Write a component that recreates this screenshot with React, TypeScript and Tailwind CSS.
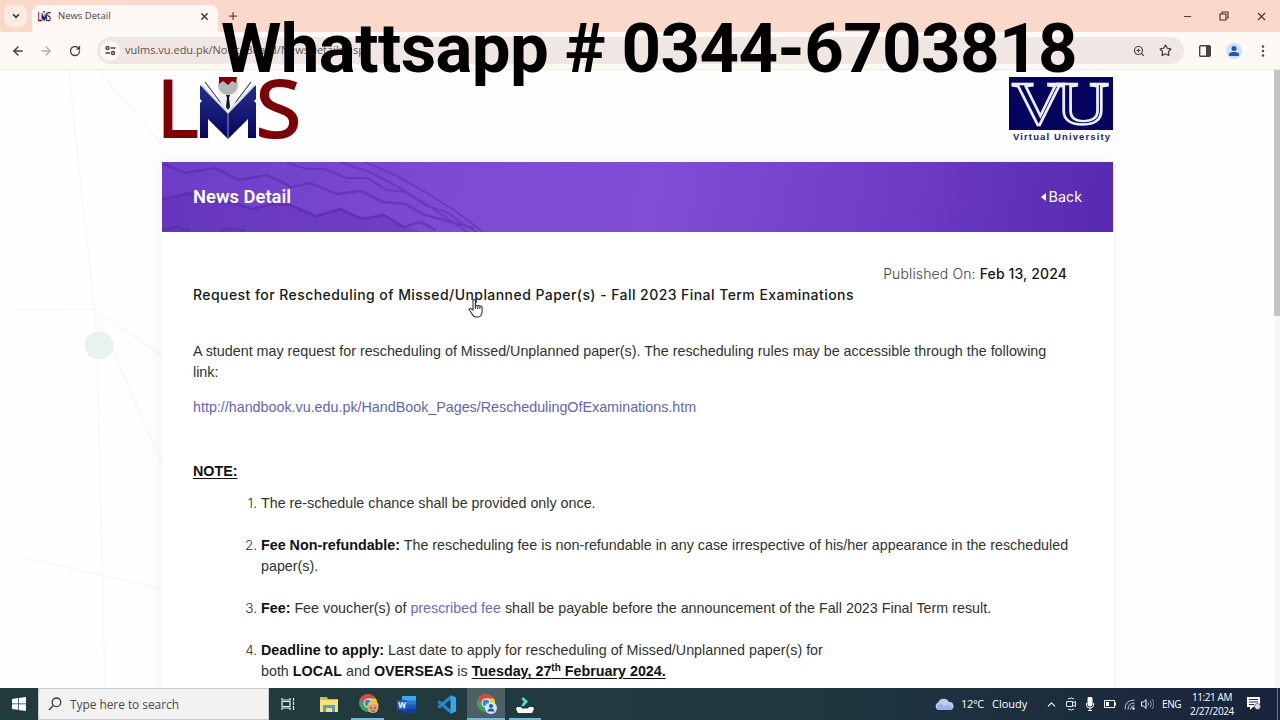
import type { ReactNode } from "react";
import { ArrowLeft, ArrowRight, ChevronDown, ChevronUp, Minus, Plus, RotateCw, Star, X, ZoomIn } from "lucide-react";

const LmsLogo = ({ className }: { className?: string }) => (
  <svg className={className} viewBox="0 0 138 66" fill="none" preserveAspectRatio="none">
    <defs>
      <linearGradient id="book" x1="0" y1="0" x2="0" y2="1">
        <stop offset="0" stopColor="#27308c" />
        <stop offset="1" stopColor="#05055c" />
      </linearGradient>
    </defs>
    <g fill="#7c0006" stroke="#7c0006" strokeWidth="2.2" fontFamily="'Open Sans', sans-serif" fontSize="79">
      <text x="-5" y="60">L</text>
      <text x="94" y="60" textLength="45" lengthAdjust="spacingAndGlyphs">S</text>
    </g>
    <path d="M38 20l2-13 26 29 26-29 2 13-28 18z" fill="#d5d8ea" />
    <path d="M43 5l22 29M89 5L67 34M39 10l18 21M93 10L75 31" stroke="#3c4488" strokeWidth="1.2" />
    <path d="M38 8l28 29 28-29v14l-2 2 2 2v35h-8V42L66 62 46 42v19h-8V26l2-2-2-2z" fill="url(#book)" />
    <path d="M66 36v26" stroke="#8c92c4" strokeWidth="1" />
    <path d="M55 13h22l-4 14-7 9-7-9z" fill="#f3f3f3" />
    <circle cx="66" cy="8" r="10" fill="#b5b7b6" />
    <path d="M57 0h18l-1 6-4-2-4 4-5-4-4 3z" fill="#7c0006" />
    <path d="M64 18h4l-1 3 1 9-2 3-2-3 1-9z" fill="#161616" />
  </svg>
);

const VuLogo = () => (
  <svg className="h-[66px] w-[104px]" viewBox="0 0 104 66">
    <rect width="104" height="53" fill="#05035e" />
    <g fill="#05035e" stroke="#eceefa" strokeWidth="2.3" fontFamily="'Liberation Serif', serif" fontSize="62">
      <text x="3" y="47" textLength="53" lengthAdjust="spacingAndGlyphs">V</text>
      <text x="47" y="47" textLength="53" lengthAdjust="spacingAndGlyphs">U</text>
    </g>
    <text x="4" y="62.5" fontFamily="'Liberation Sans', sans-serif" fontSize="9.5" fontWeight="700" fill="#25236f" textLength="97">
      Virtual University
    </text>
  </svg>
);

const Chrome = ({ children }: { children: ReactNode }) => (
  <svg className="h-[22px] w-[22px]" viewBox="0 0 22 22">
    <circle cx="10" cy="10" r="9" fill="#35a854" />
    <path d="M2.2 5.5A9 9 0 0 1 17.8 5.5H10L6 12.3z" fill="#e5453a" />
    <path d="M17.8 5.5A9 9 0 0 1 10 19l4-6.7L10 5.5z" fill="#fcc934" />
    <circle cx="10" cy="10" r="4.5" fill="#fff" />
    <circle cx="10" cy="10" r="3.5" fill="#3f7fe8" />
    {children}
  </svg>
);

const TabStrip = () => (
  <div className="flex h-8 shrink-0 bg-[#fbd9ca] pl-1">
    <div className="mt-[5px] flex h-[22px] w-[23px] items-center justify-center rounded-lg bg-[#fdece4]">
      <ChevronDown className="h-[10px] w-[10px] text-[#3b2a25]" strokeWidth={4} />
    </div>
    <div className="ml-[5px] mt-[5px] flex w-[186px] items-center rounded-t-lg bg-[#fdf8f4] pb-[5px] pl-[6px] pr-[8px]">
      <LmsLogo className="h-[11px] w-[13px] shrink-0" />
      <span className="ml-[7px] flex-1 whitespace-nowrap font-['Open_Sans',sans-serif] text-[9.500px] text-[#4a423f]">News Detail</span>
      <X className="h-[11px] w-[11px] text-[#3b302c]" strokeWidth={3} />
    </div>
    <Plus className="ml-[9px] mt-[10px] h-[12px] w-[12px] text-[#6b4638]" strokeWidth={2.5} />
    <div className="ml-auto flex items-center gap-[26px] pr-[12px] text-[#40302a]">
      <Minus className="h-[11px] w-[11px]" strokeWidth={2} />
      <svg className="h-[10px] w-[10px]" viewBox="0 0 10 10" fill="none" stroke="currentColor" strokeWidth="1.1">
        <path d="M1 3h6v6H1zM3 3V1h6v6H7" />
      </svg>
      <X className="h-[13px] w-[13px]" strokeWidth={2} />
    </div>
  </div>
);

const Toolbar = () => (
  <div className="flex h-[38px] shrink-0 items-center border-b border-[#f1ebdf] bg-[#fdf9f4] pl-[11px] text-[#4c403b]">
    <ArrowLeft className="h-[14px] w-[14px]" strokeWidth={2.5} />
    <ArrowRight className="ml-[14px] h-[14px] w-[14px] text-[#b5aca6]" strokeWidth={2.3} />
    <RotateCw className="ml-[16px] h-[12px] w-[12px]" strokeWidth={2.6} />
    <div className="ml-[16px] flex h-[27px] w-[1087px] items-center rounded-full bg-[#f0e6e3] pl-[3px] pr-[12px]">
      <div className="flex h-[20px] w-[20px] items-center justify-center rounded-full bg-[#fef9f6]">
        <svg className="h-[11px] w-[11px]" viewBox="0 0 11 11" fill="none" stroke="currentColor" strokeWidth="1.4">
          <path d="M5.5 3H10.500M.5 8H5" />
          <circle cx="2.500" cy="3" r="1.500" />
          <circle cx="8" cy="8" r="1.500" />
        </svg>
      </div>
      <span className="ml-[5px] flex-1 whitespace-nowrap font-['Open_Sans',sans-serif] text-[11px] text-[#5d5451]">
        vulms.vu.edu.pk/NoticeBoard/NewsDetails.aspx
      </span>
      <ZoomIn className="h-[12px] w-[12px]" strokeWidth={2.3} />
      <Star className="ml-[14px] h-[13px] w-[13px]" strokeWidth={2.3} />
    </div>
    <svg className="ml-[15px] h-[12px] w-[12px]" viewBox="0 0 12 12">
      <rect x=".7" y=".7" width="10.600" height="10.600" rx="1" fill="none" stroke="currentColor" strokeWidth="1.400" />
      <path d="M7 1h4.500v10H7z" fill="currentColor" />
    </svg>
    <div className="ml-[15px] flex h-[16px] w-[16px] items-center justify-center rounded-full bg-[#cfe0f8]">
      <svg className="h-[12px] w-[12px]" viewBox="0 0 12 12" fill="#1d59b5">
        <circle cx="6" cy="3.500" r="2.500" />
        <path d="M1 11V9.500C1 7.500 4 7 6 7s5 .5 5 2.500V11z" />
      </svg>
    </div>
    <svg className="ml-[19px] h-[12px] w-[4px]" viewBox="0 0 4 12" fill="currentColor">
      <circle cx="2" cy="1.500" r="1.200" />
      <circle cx="2" cy="6" r="1.200" />
      <circle cx="2" cy="10.500" r="1.200" />
    </svg>
  </div>
);

const BannerPattern = () => (
  <svg className="absolute left-0 top-0 h-[70px] w-[330px]" viewBox="0 0 330 70" fill="none">
    <path d="M0 38l28-8 22 8 22 2 18 6 20-5 18 1 26 11 24-7 22 10 22-4 20 12 16 6H0z" fill="#5527a8" opacity=".3" />
    <g stroke="#4f229f" opacity=".42">
      <path d="M0 1l23 10 30-5 24 12 28-5 25 12 18-4 27 11 24-3 22 11 22 2 20 11 22 6 26 7" strokeWidth="2.600" />
      <path d="M0 37l28-6 22 8 22 2 18 6 20-5 18 1 26 11 24-7 22 10 22-4 20 12 16-5 16 8" strokeWidth="2.600" />
      <path d="M125 1l20 6h18l22 9h20l20 12 18 2 22 14 20 6 16 12 14 8" strokeWidth="1.800" />
      <path d="M178 0l30 10 30 16 32 20 35 24M203 0l30 13 32 18 30 19 26 20" strokeWidth="1.600" />
      <path d="M0 68l14-3 14 4M58 69l12-3 14 3" strokeWidth="2" />
    </g>
  </svg>
);

const Network = () => (
  <svg className="absolute inset-0 h-[618px] w-[1274px]" viewBox="0 0 1274 618" fill="none">
    <path
      d="M69 0l10 100 13 115 5 60 8 343M98 0l66 77M14 240l84-1M98 242l63 43M98 246l63 145M18 486l144 33"
      stroke="#f7f9f8"
      strokeWidth="1.700"
    />
    <ellipse cx="99" cy="275" rx="14.500" ry="14" transform="translate(0 .5)" fill="#e9f2f1" />
  </svg>
);

const NewsCard = () => (
  <div className="relative h-[560px] w-[951px] bg-white shadow-[0_0_18px_rgba(0,0,0,0.05)]">
    <div className="relative flex h-[70px] items-center justify-between bg-linear-[100deg,#6d3dc6_0%,#7d4bd3_30%,#804dd4_52%,#6d3bc5_78%,#5728b0_100%] pl-[31px] pr-[31px] text-white">
      <BannerPattern />
      <h1 className="relative -mt-px whitespace-nowrap font-[Roboto,sans-serif] text-[18.400px] font-semibold">News Detail</h1>
      <div className="relative -mt-px flex items-center gap-[3px] font-[Inter,sans-serif] text-[14.300px]">
        <svg className="h-[8px] w-[5px]" viewBox="0 0 5 8" fill="currentColor">
          <path d="M5 0v8L0 4z" />
        </svg>
        Back
      </div>
    </div>
    <div className="whitespace-nowrap pl-[31px] pr-[46px] pt-[31px] font-['Liberation_Sans',sans-serif] text-[14.300px] leading-[21px] text-[#2e332f]">
      <p className="text-right font-[Inter,sans-serif] text-[14px] font-light tracking-[0.13px] text-[#444]">
        Published On: <span className="font-medium text-[#151515]">Feb 13, 2024</span>
      </p>
      <h2 className="font-[Inter,sans-serif] text-[14px] font-medium tracking-[0.44px] text-[#151a17]">
        Request for Rescheduling of Missed/Unplanned Paper(s) - Fall 2023 Final Term Examinations
      </h2>
      <p className="mt-[36px]">
        A student may request for rescheduling of Missed/Unplanned paper(s). The rescheduling rules may be accessible through the following
        <br />
        link:
      </p>
      <p className="mt-[14px] text-[#6266b5]">http://handbook.vu.edu.pk/HandBook_Pages/ReschedulingOfExaminations.htm</p>
      <p className="mt-[43px] font-bold text-[#111] underline underline-offset-2">NOTE:</p>
      <ol className="mt-[11px] flex flex-col gap-[21px]">
        <Item n={1}>The re-schedule chance shall be provided only once.</Item>
        <Item n={2}>
          <b className="text-[#111]">Fee Non-refundable:</b> The rescheduling fee is non-refundable in any case irrespective of his/her appearance in the rescheduled
          <br />
          paper(s).
        </Item>
        <Item n={3}>
          <b className="text-[#111]">Fee:</b> Fee voucher(s) of <span className="text-[#6a6db8]">prescribed fee</span> shall be payable before the
          announcement of the Fall 2023 Final Term result.
        </Item>
        <Item n={4}>
          <b className="text-[#111]">Deadline to apply:</b> Last date to apply for rescheduling of Missed/Unplanned paper(s) for
          <br />
          both <b className="text-[#111]">LOCAL</b> and <b className="text-[#111]">OVERSEAS</b> is{" "}
          <b className="text-[#111] underline underline-offset-2">
            Tuesday, 27<sup className="top-[-5px] text-[10px]">th</sup> February 2024.
          </b>
        </Item>
      </ol>
    </div>
  </div>
);

const Item = ({ n, children }: { n: number; children: ReactNode }) => (
  <li className="flex">
    <span className="w-[64px] shrink-0 text-right font-[Inter,sans-serif] text-[13.500px] font-light">{n}.</span>
    <div className="ml-[4px]">{children}</div>
  </li>
);

const Taskbar = () => (
  <div className="flex h-8 shrink-0 items-center bg-linear-to-r from-[#213a3c] via-[#1f393f] via-60% to-[#19233b] font-['Open_Sans',sans-serif] text-white">
    <div className="flex w-[38px] justify-center">
      <svg className="h-[14px] w-[14px]" viewBox="0 0 14 14" fill="#fff">
        <path d="M0 2l6-.9v5.500H0zM6.700 1L14 0v6.600H6.700zM0 7.300h6v5.500L0 12zM6.700 7.300H14V14l-7.300-1z" />
      </svg>
    </div>
    <div className="flex h-full w-[231px] items-center border border-[#c9cccb] bg-[#f2f2f2] pl-[9px] text-[12px] text-[#4a4a4a]">
      <svg className="h-[14px] w-[14px]" viewBox="0 0 14 14" fill="none" stroke="#3b3b3b" strokeWidth="1.300">
        <circle cx="8.500" cy="5.300" r="4.300" />
        <path d="M5.300 8.500L1 13" />
      </svg>
      <span className="ml-[8px] mt-px whitespace-nowrap tracking-[-0.080px]">Type here to search</span>
    </div>
    <div className="flex w-[38px] justify-center">
      <svg className="h-[14px] w-[14px]" viewBox="0 0 14 14" fill="none" stroke="#e6ebeb" strokeWidth="1.200">
        <path d="M1 1v2h8V1M1 13v-2h8v2M1 4.500h8v5H1zM12.500 1v3M12.500 9v4M12.500 5v3" />
      </svg>
    </div>
    <div className="flex w-[44px] justify-center">
      <svg className="h-[15px] w-[18px]" viewBox="0 0 18 15">
        <path d="M0 0h7l1 2h10v13H0z" fill="#e5b53a" />
        <path d="M0 3h18v12H0z" fill="#fbe07c" />
        <path d="M3 15V8h12v7h-3v-4H6v4z" fill="#4fa3c4" />
      </svg>
    </div>
    <div className="flex h-full w-[33px] items-center justify-center border-b-2 border-[#74b5e0] pl-[2px] pt-[2px]">
      <Chrome>
        <circle cx="15" cy="14.500" r="5.500" fill="#dba583" />
        <path d="M9.500 13c0-3 2-5 5.500-5s6 2 5.500 5l-3-2-6 1z" fill="#f1c339" />
        <path d="M12 15h2M16 15h2M13.500 18h3" stroke="#513225" strokeWidth="1" />
      </Chrome>
    </div>
    <div className="flex w-[45px] justify-center">
      <svg className="h-[17px] w-[19px]" viewBox="0 0 19 17">
        <rect x="5" y="0" width="14" height="17" rx="1" fill="#2b7cd3" />
        <path d="M5 0h14v4.500H5z" fill="#41a5ee" />
        <path d="M5 8.500h14v4H5z" fill="#185abd" />
        <path d="M5 12.500h14V17H5z" fill="#103f91" />
        <rect y="4" width="10" height="10" rx="1" fill="#1b5cbe" />
        <text x="1.200" y="12" fontFamily="'Open Sans', sans-serif" fontSize="8" fontWeight="700" fill="#fff">W</text>
      </svg>
    </div>
    <div className="flex w-[37px] justify-center pr-[3px]">
      <svg className="h-[19px] w-[19px]" viewBox="0 0 19 19" fill="none">
        <path d="M14 2L1.500 12.500M14 17L1.500 6.500" stroke="#2489ca" strokeWidth="3" />
        <path d="M13.500 0L19 2.500v14L13.500 19z" fill="#36a7ec" />
      </svg>
    </div>
    <div className="ml-[1px] flex h-full w-[38px] items-center justify-center border-b-2 border-[#74b5e0] bg-[#4b6166] pl-[2px] pt-[2px]">
      <Chrome>
        <circle cx="15" cy="15" r="6" fill="#d4e5fb" />
        <circle cx="15" cy="13" r="2" fill="#2457a7" />
        <path d="M11.500 18.500c0-4 7-4 7 0z" fill="#2457a7" />
      </Chrome>
    </div>
    <div className="ml-[4px] flex h-full w-[32px] items-center justify-center border-b-2 border-[#74b5e0]">
      <svg className="mt-[3px] h-[16px] w-[18px]" viewBox="0 0 18 16">
        <path d="M7 0l5 4.500L8 9H5l3-4.500L5.500 2z" fill="#56dfc0" />
        <path d="M1 10h4l1 1.500h6L13 10h4l1 2-2 4H2l-2-4z" fill="#fff" />
      </svg>
    </div>

    <div className="ml-auto flex h-full items-center">
      <svg className="h-[14px] w-[20px]" viewBox="0 0 20 14">
        <path d="M4.500 13a4 4 0 0 1-.5-7.500A6 6 0 0 1 15 5a4 4 0 0 1 1 8z" fill="#b9cdf0" />
        <path d="M4 13a4 4 0 0 1 1-6c3-1 4 1 5 3 2-3 6-3 8 0-.5 2-1 3-3 3z" fill="#96b3e5" />
      </svg>
      <span className="ml-[7px] whitespace-nowrap text-[11px] tracking-[-0.3px]">12°C</span>
      <span className="ml-[8px] w-[35px] whitespace-nowrap text-[11px]">Cloudy</span>
      <ChevronUp className="ml-[18px] h-[13px] w-[13px]" strokeWidth={2} />
      <svg className="ml-[8px] h-[14px] w-[10px]" viewBox="0 0 10 14" fill="none" stroke="#e6e8ee">
        <path d="M.5 4.500h6v5h-6zM6.500 6l3-1.500v5L6.500 8M2 2q3-2 6 0M2 12q3 2 6 0" />
      </svg>
      <svg className="ml-[10px] h-[14px] w-[8px]" viewBox="0 0 8 14" fill="none" stroke="#fff">
        <rect x="2" y="0" width="4" height="9" rx="1.500" fill="#fff" />
        <path d="M.5 6v2.500Q.5 11 4 11t3.500-2.500V6M4 11v3M2 13.500h4" />
      </svg>
      <svg className="ml-[10px] h-[8px] w-[12px]" viewBox="0 0 12 8" fill="none" stroke="#fff">
        <path d="M.5.500h10v7H.5zM11.500 2.500v3" />
        <path d="M2 2h3v4H2z" fill="#fff" stroke="none" />
      </svg>
      <svg className="ml-[8px] h-[11px] w-[11px]" viewBox="0 0 11 11" fill="none" stroke="#c6cad4">
        <path d="M1 10.500Q1 1 10.500 1M4 10.500Q4 4 10.500 4M6.500 10.500q0-4 4-4" />
        <circle cx="9.500" cy="9.500" r="1.200" fill="#fff" stroke="none" />
      </svg>
      <svg className="ml-[6px] h-[12px] w-[13px]" viewBox="0 0 13 12" fill="none" stroke="#fff">
        <path d="M.5 4h2L5 1.500v9L2.500 8h-2z" />
        <path d="M7 4q1.500 2 0 4M9 2.500q3 3.500 0 7M11 1q4 5 0 10" stroke="#8c94a5" />
      </svg>
      <span className="ml-[8px] w-[20px] whitespace-nowrap text-[10px] tracking-[-0.4px]">ENG</span>
      <div className="ml-[6px] w-[48px] whitespace-nowrap text-center text-[10px] leading-[14px] tracking-[-0.4px]">
        11:21 AM
        <br />
        2/27/2024
      </div>
      <svg className="ml-[11px] h-[14px] w-[14px]" viewBox="0 0 14 14">
        <path d="M0 0h13v10H6l-3 3v-3H0z" fill="#fff" />
        <path d="M2 2.500h9M2 5h9M2 7.500h5" stroke="#28314a" />
        <circle cx="10.500" cy="9.500" r="3" fill="#d7dbe4" stroke="#28314a" strokeWidth=".6" />
      </svg>
      <div className="ml-[16px] mr-[2px] h-full w-px bg-[#6d7486]" />
    </div>
  </div>
);

export default function App() {
  return (
    <div className="relative flex h-[720px] w-[1280px] flex-col overflow-hidden bg-white">
      <TabStrip />
      <Toolbar />
      <div className="relative flex h-[618px] shrink-0 overflow-hidden bg-[#fefefe]">
        <Network />
        <main className="flex-1 pl-[162px]">
          <div className="relative mb-[19px] mt-[7px] flex h-[66px] w-[951px] justify-between">
            <LmsLogo className="h-[66px] w-[138px]" />
            <VuLogo />
          </div>
          <NewsCard />
        </main>
        <div className="relative w-[6px] bg-[#f7f7f7]">
          <div className="h-[246px] bg-[#c4c4c4]" />
        </div>
      </div>
      <Taskbar />

      {/* caption over the browser window */}
      <div className="absolute left-[221px] top-[9px] whitespace-nowrap font-[Roboto,sans-serif] text-[69px] font-bold leading-[80px] tracking-[-0.600px] text-black">
        Whattsapp # 0344-6703818
      </div>

      {/* hand pointer */}
      <svg className="absolute left-[468px] top-[298px] h-[20px] w-[16px]" viewBox="0 0 16 20" fill="#fff" stroke="#333" strokeWidth="1.100">
        <path d="M5 12V2.500q1.200-2 2.400 0V8q1.300-1.300 2.300 0 1.300-1 2.200.3 1.800-.8 2.200 1V14q-.5 4-3.600 5H7Q4.500 17.500 3.500 15L1 11.500q.5-1.800 2.500-.5z" />
        <path d="M7.400 8v3M9.700 8.300V11M11.900 8.600V11" fill="none" />
      </svg>
    </div>
  );
}
